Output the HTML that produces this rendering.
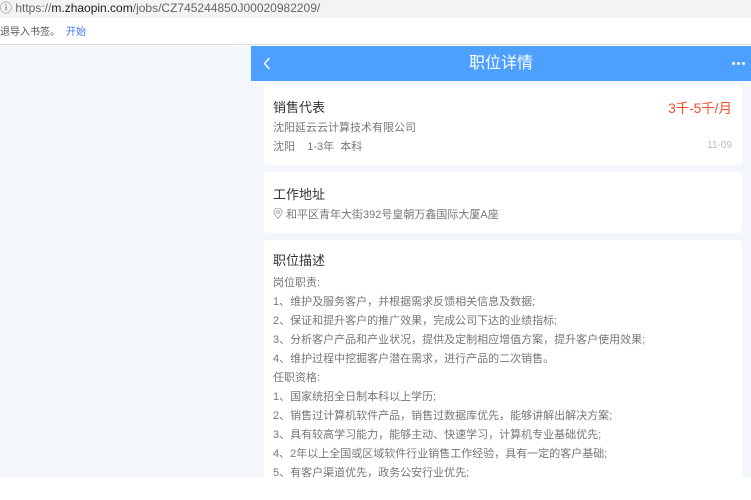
<!DOCTYPE html>
<html><head><meta charset="utf-8"><style>
*{margin:0;padding:0;box-sizing:border-box}
body{width:751px;height:478px;overflow:hidden;background:#fff;font-family:"Liberation Sans","Noto Sans CJK SC",sans-serif;position:relative}
.addr{position:absolute;left:0;top:0;width:751px;height:18px;background:#f1f3f4;font-size:12px;color:#666;line-height:16px}
.addr b{font-weight:normal;color:#222}
.bm{position:absolute;left:0;top:18px;width:751px;height:27px;background:#fff;font-size:10px;color:#555;line-height:30px;border-bottom:1px solid #ddd}
.bm span{color:#3b78e7;margin-left:6px}
.left{position:absolute;left:0;top:46px;width:251px;height:432px;background:#f3f6fa}
.main{position:absolute;left:251px;top:46px;width:500px;height:432px;background:#f3f6fa}
.hd{height:35px;background:#4da0ff;color:#fff;text-align:center;font-size:16px;line-height:36px;position:relative}
.dots{position:absolute;right:6px;top:16px;display:flex;gap:2px;line-height:0}
.dots i{display:block;width:3px;height:3px;border-radius:50%;background:#fff}
.card{position:absolute;left:13px;width:478px;background:#fff;border-radius:3px;padding:0 9px}
.t{font-size:13px;color:#333}
.g{font-size:11px;color:#777}
</style></head><body>
<div class="addr">&#9432; https://<b>m.zhaopin.com</b>/jobs/CZ745244850J00020982209/</div>
<div class="bm">退导入书签。<span>开始</span></div>
<div class="left"></div>
<div class="main">
<div class="hd"><svg style="position:absolute;left:12px;top:11px" width="8" height="13" viewBox="0 0 8 13"><path d="M6.5 1 L1.5 6.5 L6.5 12" stroke="#fff" stroke-width="1.4" fill="none"/></svg>职位详情<span class="dots"><i></i><i></i><i></i></span></div>
<div class="card" style="top:39px;height:80px">
<div class="t" style="position:absolute;top:12px">销售代表</div>
<div style="position:absolute;right:10px;top:12px;font-size:13.5px;color:#ff4a2b">3千-5千/月</div>
<div class="g" style="position:absolute;top:34px">沈阳延云云计算技术有限公司</div>
<div class="g" style="position:absolute;top:53px">沈阳&nbsp;&nbsp;&nbsp;&nbsp;1-3年&nbsp;&nbsp;本科</div>
<div style="position:absolute;right:10px;top:55px;font-size:10px;color:#bbb">11-09</div>
</div>
<div class="card" style="top:126px;height:61px">
<div class="t" style="position:absolute;top:12px">工作地址</div>
<div class="g" style="position:absolute;top:34px"><svg width="10" height="11" viewBox="0 0 10 11" style="vertical-align:-1px"><path d="M5 10.5 C2 7 1 5.5 1 4 A4 4 0 0 1 9 4 C9 5.5 8 7 5 10.5Z" stroke="#aaa" fill="none"/><circle cx="5" cy="4" r="1.4" stroke="#aaa" fill="none"/></svg> 和平区青年大街392号皇朝万鑫国际大厦A座</div>
</div>
<div class="card" style="top:194px;height:260px;padding-top:11px">
<div class="t" style="margin-bottom:3px;line-height:20px">职位描述</div>
<div class="g" style="line-height:19px">岗位职责:<br>1、维护及服务客户，并根据需求反馈相关信息及数据;<br>2、保证和提升客户的推广效果，完成公司下达的业绩指标;<br>3、分析客户产品和产业状况，提供及定制相应增值方案，提升客户使用效果;<br>4、维护过程中挖掘客户潜在需求，进行产品的二次销售。<br>任职资格:<br>1、国家统招全日制本科以上学历;<br>2、销售过计算机软件产品，销售过数据库优先，能够讲解出解决方案;<br>3、具有较高学习能力，能够主动、快速学习，计算机专业基础优先;<br>4、2年以上全国或区域软件行业销售工作经验，具有一定的客户基础;<br>5、有客户渠道优先，政务公安行业优先;</div>
</div>
</div>
</body></html>
